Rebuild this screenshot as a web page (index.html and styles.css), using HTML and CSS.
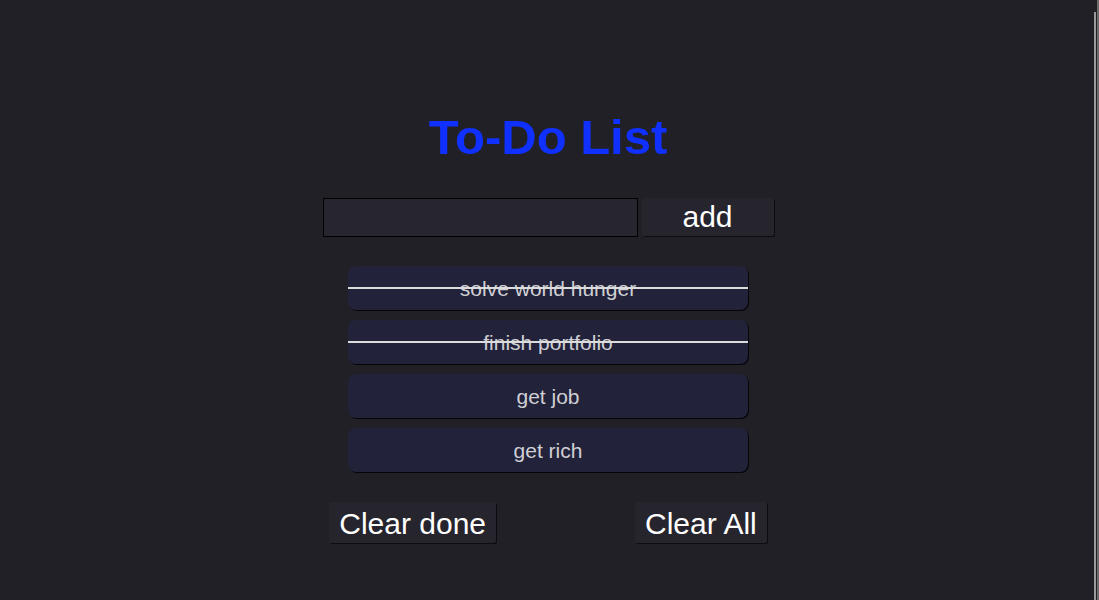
FILE: index.html
```html
<!DOCTYPE html>
<html>
<head>
<meta charset="utf-8">
<link rel="stylesheet" href="styles.css">
</head>
<body>
<div class="edge"><div class="edge-thumb"></div></div>
<main class="app">
  <h1 class="title">To-Do List</h1>
  <form class="entry">
    <input class="entry-input" type="text">
    <button type="button" class="btn btn-add">add</button>
  </form>
  <ul class="list">
    <li class="item done">solve world hunger</li>
    <li class="item done">finish portfolio</li>
    <li class="item">get job</li>
    <li class="item">get rich</li>
  </ul>
  <div class="actions">
    <button type="button" class="btn btn-clear">Clear done</button>
    <button type="button" class="btn btn-clear">Clear All</button>
  </div>
</main>
</body>
</html>
```
FILE: styles.css
```css
html, body {
  margin: 0;
  padding: 0;
  height: 100%;
}
body {
  background: #202026;
  font-family: "Liberation Sans", Arial, sans-serif;
  overflow: hidden;
}
.edge {
  position: fixed;
  top: 0;
  right: 0;
  width: 6px;
  height: 100%;
  background: linear-gradient(to right, transparent 0, transparent 4px, #6e6e6e 4px, #6e6e6e 6px);
}
.edge-thumb {
  position: absolute;
  top: 12px;
  bottom: 0;
  left: 1px;
  width: 2px;
  background: #9a9a9a;
}
.app {
  display: flex;
  flex-direction: column;
  align-items: center;
  padding: 107px 3px 0 0;
}
.title {
  margin: 0;
  font-size: 49px;
  line-height: 60px;
  font-weight: bold;
  color: #1030ff;
}
.entry {
  display: flex;
  gap: 4px;
  margin-top: 31px;
}
.entry-input {
  box-sizing: border-box;
  width: 315px;
  height: 39px;
  margin: 0;
  border: 1px solid #000;
  background: #27262f;
  color: #fff;
  outline: none;
}
.btn {
  box-sizing: border-box;
  margin: 0;
  border: none;
  border-radius: 2px;
  background: #26252e;
  color: #fff;
  font-family: "Liberation Sans", Arial, sans-serif;
  font-size: 30px;
  box-shadow: 1px 1px 0 #0c0c10;
  padding: 0;
}
.btn-add {
  width: 132px;
  height: 38px;
  line-height: 38px;
}
.list {
  list-style: none;
  margin: 29px 0 0;
  padding: 0;
  display: flex;
  flex-direction: column;
  gap: 10px;
}
.item {
  position: relative;
  width: 400px;
  height: 44px;
  line-height: 46px;
  border-radius: 8px;
  background: #22223a;
  box-shadow: 1px 1px 0 #050508;
  color: #cfcfd4;
  font-size: 21px;
  text-align: center;
}
.item.done::after {
  content: "";
  position: absolute;
  left: 0;
  right: 0;
  top: 21px;
  height: 2px;
  background: #dcdcdc;
}
.actions {
  display: flex;
  gap: 139px;
  margin-top: 30px;
}
.btn-clear {
  height: 41px;
  line-height: 43px;
  padding: 0 10px;
}
```
